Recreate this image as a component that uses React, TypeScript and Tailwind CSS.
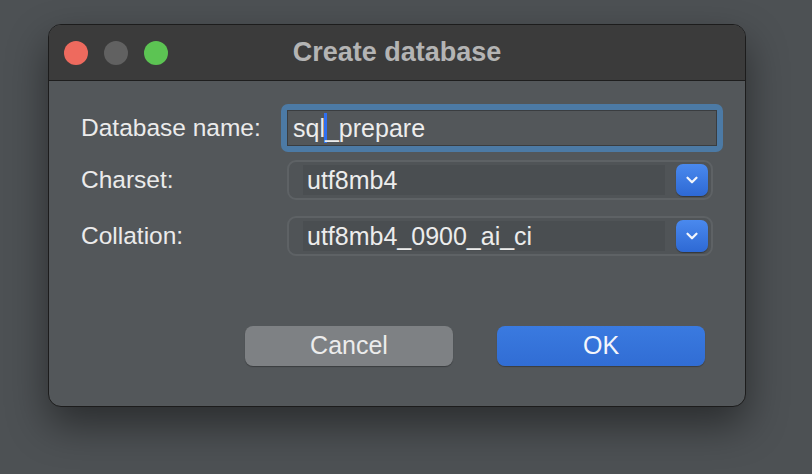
import { ChevronDown } from "lucide-react";

const font = { fontFamily: "'Liberation Sans', Arial, sans-serif" };

function TrafficLights() {
  return (
    <div className="flex items-center gap-[16px]">
      <span className="block w-[24px] h-[24px] rounded-full bg-[#ee6a5e]" />
      <span className="block w-[24px] h-[24px] rounded-full bg-[#616161]" />
      <span className="block w-[24px] h-[24px] rounded-full bg-[#5cc453]" />
    </div>
  );
}

function Select({ value }: { value: string }) {
  return (
    <div className="ml-[6px] w-[426px] h-[40px] rounded-[9px] border-2 border-[#5e6265] bg-[#505457] flex items-center pl-[14px] pr-[3px]">
      <div className="flex-1 h-[30px] bg-[#4a4e51] flex items-center pl-[4px] text-[25px] text-[#ececec] leading-none">
        {value}
      </div>
      <div className="ml-[11px] w-[32px] h-[32px] rounded-[7px] bg-gradient-to-b from-[#4a89ee] to-[#2e69d4] flex items-center justify-center shadow-[0_1px_1px_rgba(0,0,0,0.35)]">
        <ChevronDown size={18} strokeWidth={3} color="#f2f5fb" />
      </div>
    </div>
  );
}

export default function App() {
  return (
    <div
      className="w-[812px] h-[474px] bg-[#4d5154] pt-[24px] pl-[48px]"
      style={font}
    >
      <div className="w-[698px] h-[383px] rounded-[13px] border border-[#1c1c1c] overflow-hidden bg-[#53575a] shadow-[0_18px_40px_rgba(0,0,0,0.45)] flex flex-col">
        {/* title bar */}
        <div className="h-[56px] bg-[#3b3b3b] border-b border-[#1e1e1e] flex items-center pl-[15px] relative">
          <TrafficLights />
          <div className="absolute inset-0 flex items-center justify-center text-[27px] font-bold text-[#b4b4b4]">
            Create database
          </div>
        </div>

        {/* form */}
        <div className="flex flex-col pt-[23px] pl-[32px]">
          <div className="flex items-center h-[48px]">
            <div className="w-[200px] text-[24.5px] text-[#ebebeb]">Database name:</div>
            <div className="w-[442px] h-[48px] rounded-[7px] bg-[#4c7aa5] p-[6px]">
              <div className="w-full h-full border border-[#3a3d40] bg-[#53575a] flex items-center pl-[5px] text-[25px] text-[#ededed] leading-none">
                sql
                <span className="inline-block w-[3px] h-[30px] bg-[#2f6ff0] -mr-[2px] -ml-[1px]" />
                _prepare
              </div>
            </div>
          </div>

          <div className="flex items-center h-[40px] mt-[8px]">
            <div className="w-[200px] text-[24.5px] text-[#ebebeb]">Charset:</div>
            <Select value="utf8mb4" />
          </div>

          <div className="flex items-center h-[40px] mt-[16px]">
            <div className="w-[200px] text-[24.5px] text-[#ebebeb]">Collation:</div>
            <Select value="utf8mb4_0900_ai_ci" />
          </div>

          <div className="flex gap-[44px] mt-[70px] ml-[164px]">
            <button className="w-[208px] h-[40px] rounded-[8px] bg-[#7e8184] text-[25px] text-[#ececec] shadow-[0_1px_1px_rgba(0,0,0,0.3)]">
              Cancel
            </button>
            <button className="w-[208px] h-[40px] rounded-[8px] bg-gradient-to-b from-[#3a7ae0] to-[#316dd4] text-[25px] text-[#f4f6fb] shadow-[0_1px_1px_rgba(0,0,0,0.3)]">
              OK
            </button>
          </div>
        </div>
      </div>
    </div>
  );
}
